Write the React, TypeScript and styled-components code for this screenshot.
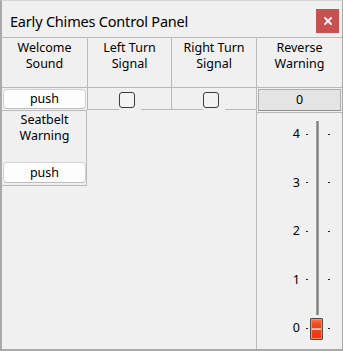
import styled, { createGlobalStyle } from 'styled-components';

const GlobalStyle = createGlobalStyle`
	html, body {
		margin: 0;
		padding: 0;
		background: #ffffff;
	}
	* {
		box-sizing: border-box;
	}
`

const LINE = '#b9b9b9';

const Window = styled.div`
	width: 343px;
	height: 351px;
	display: flex;
	flex-direction: column;
	background: #f0f0f0;
	border-style: solid;
	border-color: #d6d6d6 #a9a9a9 #a9a9a9 #a9a9a9;
	border-width: 1px 1px 2px 2px;
	font-family: "Noto Sans", "Open Sans", sans-serif;
	color: #000;
	overflow: hidden;
`

const TitleBar = styled.div`
	height: 37px;
	flex: none;
	display: flex;
	align-items: center;
	justify-content: space-between;
	padding: 4px 3px 0 8px;
	border-bottom: 1px solid ${LINE};
`

const Title = styled.span`
	font-size: 14.5px;
	letter-spacing: -0.2px;
`

const CloseButton = styled.button`
	width: 23px;
	height: 24px;
	border: none;
	padding: 0;
	background: #c75050;
	display: flex;
	align-items: center;
	justify-content: center;
`

const Body = styled.div`
	flex: 1;
	display: flex;
	flex-direction: row;
	min-height: 0;
`

const Column = styled.div`
	width: ${props => props.$width}px;
	flex: none;
	display: flex;
	flex-direction: column;
	border-right: ${props => props.$ruled ? `1px solid ${LINE}` : 'none'};
`

const Header = styled.div`
	height: 50px;
	padding-top: 2px;
	text-align: center;
	font-size: 12.5px;
	line-height: 16px;
	border-bottom: 1px solid ${LINE};
	border-right: ${props => props.$ruled ? `1px solid ${LINE}` : 'none'};
`

const WidgetRow = styled.div`
	height: 22px;
	display: flex;
	flex-direction: row;
	padding: 1px 1px 1px 1px;
	border-right: ${props => props.$ruled ? `1px solid ${LINE}` : 'none'};
`

const PushButton = styled.button`
	flex: 1;
	height: ${props => props.$tall ? 21 : 20}px;
	background: #fdfdfd;
	border: 1px solid #d2d2d2;
	border-bottom-color: #bdbdbd;
	border-radius: 4px;
	font-family: "Noto Sans", "Open Sans", sans-serif;
	font-size: 12.5px;
	color: #000;
	padding: 0;
	line-height: 18px;
`

const CheckRow = styled.div`
	height: 22px;
	display: flex;
	flex-direction: row;
	border-right: ${props => props.$ruled ? `1px solid ${LINE}` : 'none'};
`

const RowLine = styled.div`
	flex: 1;
	border-bottom: 1px solid ${LINE};
`

const CheckHolder = styled.div`
	width: 22px;
	padding-top: 4px;
`

const CheckBox = styled.div`
	width: 16px;
	height: 16px;
	border: 1px solid #3c3c3c;
	border-radius: 3px;
	background: #f4f4f4;
`

const SeatbeltBox = styled.div`
	width: 85px;
	height: 76px;
	display: flex;
	flex-direction: column;
	justify-content: space-between;
	padding: 1px 0 2px 1px;
	border-top: 1px solid ${LINE};
	border-right: 1px solid ${LINE};
	border-bottom: 1px solid ${LINE};
`

const BoxLabel = styled.div`
	text-align: center;
	font-size: 12.5px;
	line-height: 16px;
`

const BoxButtonRow = styled.div`
	display: flex;
`

const ValueRow = styled.div`
	height: 24px;
	padding: 1px;
	display: flex;
`

const ValueButton = styled.div`
	flex: 1;
	height: 22px;
	background: #e4e4e4;
	border: 1px solid #adadad;
	border-bottom-color: #8f8f8f;
	font-size: 12.5px;
	line-height: 20px;
	text-align: center;
`

const SliderArea = styled.div`
	flex: 1;
	position: relative;
	border-top: 1px solid ${LINE};
`

const Scale = styled.div`
	display: flex;
	flex-direction: column;
	gap: 34.5px;
	padding-top: 14px;
`

const TickRow = styled.div`
	display: grid;
	grid-template-columns: 43px 6px 2px 20px 2px;
	align-items: center;
	height: 14px;
`

const TickLabel = styled.span`
	grid-column: 1;
	text-align: right;
	font-size: 12.5px;
	line-height: 14px;
`

const TickMark = styled.span`
	grid-column: ${props => props.$col};
	width: 2px;
	height: 1px;
	background: #222;
`

const Track = styled.div`
	position: absolute;
	left: 59px;
	top: 8px;
	width: 3px;
	height: 194px;
	background: linear-gradient(to right, #b4b4b4, #7d7d7d 50%, #b4b4b4);
`

const Handle = styled.div`
	position: absolute;
	left: 53px;
	top: 205px;
	width: 13px;
	height: 22px;
	border: 1px solid #4b4b4b;
	border-radius: 1px;
	box-shadow: inset 0 0 0 1px #ff8a60;
	background: linear-gradient(
		to bottom,
		#ff7a50 0%,
		#f4502a 20%,
		#ee3f1a 46%,
		#ffd8c8 48%,
		#ffd8c8 53%,
		#ee3f1a 56%,
		#e83812 100%
	);
`

const ticks = [4, 3, 2, 1, 0];

const App = () => {
	return (
		<>
			<GlobalStyle />
			<Window>
				<TitleBar>
					<Title>Early Chimes Control Panel</Title>
					<CloseButton>
						<svg width="8" height="8" viewBox="0 0 8 8">
							<path d="M1 1 L7 7 M7 1 L1 7" stroke="#fff" strokeWidth="1.8" strokeLinecap="square" />
						</svg>
					</CloseButton>
				</TitleBar>
				<Body>
					<Column $width={86}>
						<Header $ruled>Welcome<br />Sound</Header>
						<WidgetRow $ruled>
							<PushButton>push</PushButton>
						</WidgetRow>
						<SeatbeltBox>
							<BoxLabel>Seatbelt<br />Warning</BoxLabel>
							<BoxButtonRow>
								<PushButton $tall>push</PushButton>
							</BoxButtonRow>
						</SeatbeltBox>
					</Column>
					<Column $width={84}>
						<Header $ruled>Left Turn<br />Signal</Header>
						<CheckRow $ruled>
							<RowLine />
							<CheckHolder><CheckBox /></CheckHolder>
							<RowLine />
						</CheckRow>
					</Column>
					<Column $width={85} $ruled>
						<Header>Right Turn<br />Signal</Header>
						<CheckRow>
							<RowLine />
							<CheckHolder><CheckBox /></CheckHolder>
							<RowLine />
						</CheckRow>
					</Column>
					<Column $width={85}>
						<Header>Reverse<br />Warning</Header>
						<ValueRow>
							<ValueButton>0</ValueButton>
						</ValueRow>
						<SliderArea>
							<Scale>
								{ticks.map(t => (
									<TickRow key={t}>
										<TickLabel>{t}</TickLabel>
										<TickMark $col={3} />
										<TickMark $col={5} />
									</TickRow>
								))}
							</Scale>
							<Track />
							<Handle />
						</SliderArea>
					</Column>
				</Body>
			</Window>
		</>
	)
}

export default App
